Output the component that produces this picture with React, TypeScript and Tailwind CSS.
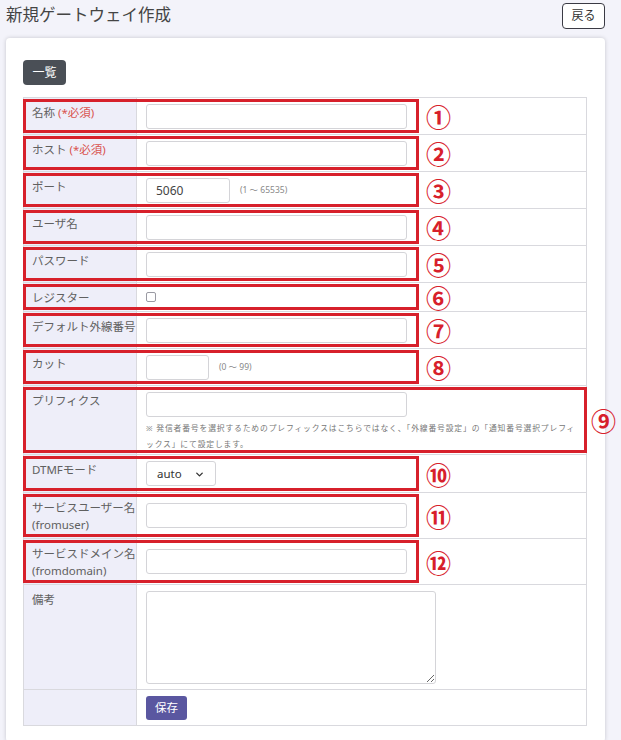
import React from "react";
import { ChevronDown } from "lucide-react";

const jp = { fontFamily: '"Noto Sans", "Noto Sans CJK JP", sans-serif' };

function Mark({ n, className = "" }: { n: string; className?: string }) {
  return (
    <span
      className={`absolute top-1/2 -translate-y-1/2 text-[25px] leading-none font-bold text-[#d7202b] ${className}`}
      style={{ fontFamily: '"Noto Sans CJK JP", sans-serif' }}
    >
      {n}
    </span>
  );
}

function Box({ full = false }: { full?: boolean }) {
  return (
    <div
      className={`absolute top-[1px] bottom-[1px] left-[-1px] border-[3px] border-[#d7202b] pointer-events-none ${
        full ? "right-[-1px]" : "w-[396px]"
      }`}
    />
  );
}

function TextInput({ w = "w-[261px]", value = "" }: { w?: string; value?: string }) {
  return (
    <input
      type="text"
      defaultValue={value}
      className={`${w} h-[25px] border border-[#d4d4d8] rounded-[3px] bg-white px-[9px] text-[12px] text-[#444] outline-none`}
      style={jp}
    />
  );
}

function Row({
  label,
  required,
  h = "h-[37px]",
  mark,
  full,
  children,
  top = false,
}: {
  label: React.ReactNode;
  required?: boolean;
  h?: string;
  mark?: string;
  full?: boolean;
  children?: React.ReactNode;
  top?: boolean;
}) {
  return (
    <div className={`relative flex border-t border-[#d9d9de] ${h}`}>
      <div className="w-[113px] shrink-0 bg-[#eeeef9] border-r border-[#d9d9de] pl-[8px] pt-[6px] text-[11.5px] leading-[17px] text-[#606060]">
        {label}
        {required && <span className="text-[#d9534f]"> (*必須)</span>}
      </div>
      <div className={`flex-1 flex pl-[9px] pr-[9px] ${top ? "flex-col pt-[6px]" : "items-center"}`}>
        {children}
      </div>
      {mark && (
        <>
          <Box full={full} />
          <Mark n={mark} className={full ? "left-[567px]" : "left-[402px]"} />
        </>
      )}
    </div>
  );
}

export default function App() {
  return (
    <div className="min-h-screen bg-[#f3f3fa] pb-6" style={jp}>
      <header className="flex items-start justify-between pl-[6px] pr-[16px] pt-[3px] h-[38px]">
        <h1 className="text-[16.5px] leading-[24px] text-[#444]">新規ゲートウェイ作成</h1>
        <button className="block h-[26px] w-[43px] border border-[#3a3a44] rounded-[4px] text-[12px] text-[#333] bg-white">
          戻る
        </button>
      </header>

      <div className="ml-[6px] mr-[16px] bg-white rounded-[4px] shadow-[0_0_4px_rgba(0,0,0,0.18)] pt-[22px] pl-[17px] pr-[18px] pb-[16px]">
        <button className="block h-[25px] w-[43px] rounded-[4px] bg-[#4a4f56] text-white text-[12px]">一覧</button>

        <div className="mt-[12px] border-b border-l border-r border-[#d9d9de]">
          <Row label="名称" required mark="①">
            <TextInput />
          </Row>
          <Row label="ホスト" required mark="②">
            <TextInput />
          </Row>
          <Row label="ポート" mark="③">
            <TextInput w="w-[84px]" value="5060" />
            <span className="ml-[10px] text-[8.5px] text-[#888]">(1 ～ 65535)</span>
          </Row>
          <Row label="ユーザ名" mark="④">
            <TextInput />
          </Row>
          <Row label="パスワード" mark="⑤">
            <TextInput />
          </Row>
          <Row label="レジスター" h="h-[29px]" mark="⑥">
            <span className="w-[10px] h-[10px] border border-[#9a9aa3] rounded-[2px] bg-white" />
          </Row>
          <Row label="デフォルト外線番号" mark="⑦">
            <TextInput />
          </Row>
          <Row label="カット" mark="⑧">
            <TextInput w="w-[63px]" />
            <span className="ml-[10px] text-[8.5px] text-[#888]">(0 ～ 99)</span>
          </Row>
          <Row label="プリフィクス" h="h-[69px]" mark="⑨" full top>
            <TextInput />
            <p className="mt-[3px] text-[7.8px] leading-[16px] tracking-[0.85px] text-[#777]">
              ※ 発信者番号を選択するためのプレフィックスはこちらではなく、「外線番号設定」の「通知番号選択プレフィックス」にて設定します。
            </p>
          </Row>
          <Row label="DTMFモード" h="h-[38px]" mark="⑩">
            <div className="relative w-[70px] h-[25px] border border-[#d4d4d8] rounded-[3px] flex items-center pl-[10px] text-[11.5px] text-[#333]">
              auto
              <ChevronDown className="absolute right-[10px] top-[7px] w-[11px] h-[11px]" strokeWidth={3} />
            </div>
          </Row>
          <Row
            label={
              <>
                サービスユーザー名
                <br />
                (fromuser)
              </>
            }
            h="h-[46px]"
            mark="⑪"
          >
            <TextInput />
          </Row>
          <Row
            label={
              <>
                サービスドメイン名
                <br />
                (fromdomain)
              </>
            }
            h="h-[46px]"
            mark="⑫"
          >
            <TextInput />
          </Row>
          <Row label="備考" h="h-[105px]" top>
            <textarea className="block w-[290px] h-[93px] border border-[#d4d4d8] rounded-[3px] outline-none" />
          </Row>
          <Row label="" h="h-[36px]">
            <button className="block h-[24px] w-[41px] rounded-[3px] bg-[#5a57a0] text-white text-[11.5px]">保存</button>
          </Row>
        </div>
      </div>
    </div>
  );
}
